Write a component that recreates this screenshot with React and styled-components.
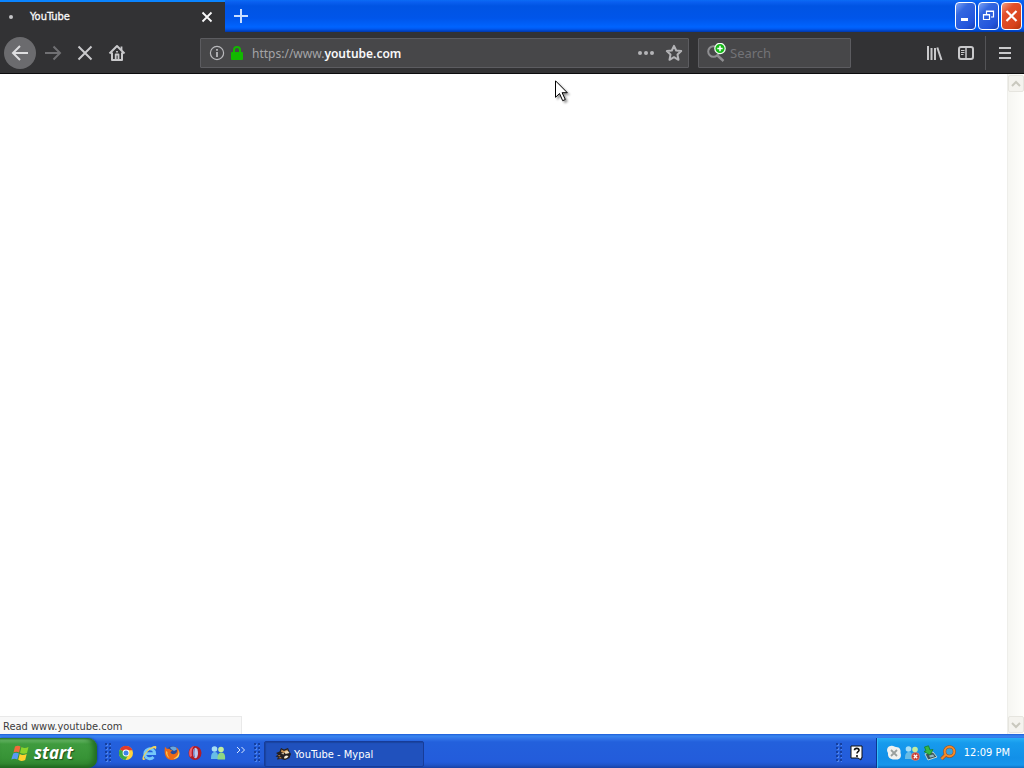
import React from "react";
import styled, { createGlobalStyle } from "styled-components";

const Global = createGlobalStyle`
  * { box-sizing: border-box; }
  body { margin: 0; font-family: "DejaVu Sans Condensed", "Noto Sans", sans-serif; font-size: 11px; }
  button, input { font: inherit; color: inherit; margin: 0; padding: 0; border: 0; background: none; }
  svg { display: block; flex: none; }
`;

const Desktop = styled.div`
  position: relative;
  display: flex;
  flex-direction: column;
  min-height: 100vh;
  background: #fff;
  overflow: hidden;
`;

const TitleBar = styled.header`
  display: flex;
  align-items: stretch;
  height: 32px;
  background: linear-gradient(#0b6cf5 0, #0a5ff0 2px, #0054e3 6px, #0055e9 18px, #0064ff 27px, #0058f0 29px, #0036a8 32px);
`;

const Tab = styled.div`
  display: flex;
  align-items: center;
  width: 225px;
  padding: 0 8px;
  border-top: 2px solid #0a84ff;
  background: #323234;
  color: #f9f9fa;
`;

const LoadingDot = styled.span`
  width: 4px;
  height: 4px;
  margin: 0 17px 0 1px;
  border-radius: 2px;
  background: #c4c4c6;
`;

const TabTitle = styled.span`
  flex: 1;
  line-height: 16px;
  -webkit-text-stroke: 0.3px;
`;

const IconButton = styled.button`
  display: flex;
  align-items: center;
  justify-content: center;
  flex: none;
  width: ${(p) => p.$w || 32}px;
  height: ${(p) => p.$h || 32}px;
  color: ${(p) => p.$color || "#c9c9cb"};
`;

const BackButton = styled(IconButton)`
  margin-right: 1px;
  border-radius: 50%;
  background: #6b6b6e;
  color: #dedee0;
`;

const WindowControls = styled.div`
  display: flex;
  gap: 2px;
  margin-left: auto;
  padding: 2px 2px 2px 0;
`;

const WindowButton = styled.button`
  display: flex;
  align-items: center;
  justify-content: center;
  width: 21px;
  height: 28px;
  border: 1px solid #fff;
  border-radius: 4px;
  background: ${(p) =>
    p.$close
      ? "linear-gradient(135deg, #f0a085, #e2502c 30%, #d8431c 75%, #b33309)"
      : "linear-gradient(135deg, #7da3f5, #3367e0 30%, #2355dc 75%, #1841b8)"};
`;

const NavBar = styled.nav`
  display: flex;
  align-items: center;
  height: 42px;
  padding: 1px 3px 0 4px;
  border-bottom: 1px solid #0c0c0d;
  background: #323234;
`;

const Field = styled.div`
  display: flex;
  align-items: center;
  height: 30px;
  border: 1px solid #5c5c60;
  border-radius: 1px;
  background: #474749;
`;

const AddressField = styled(Field)`
  flex: 1;
  min-width: 0;
  margin-left: 67px;
  padding-left: 8px;
  font-family: "Noto Sans", sans-serif;
  font-size: 12px;
`;

const Scheme = styled.label`
  margin-left: 3px;
  color: #a4a4a7;
`;

const AddressInput = styled.input`
  flex: 1;
  min-width: 0;
  color: #f9f9fa;
  font-weight: 600;
  outline: 0;
`;

const SearchField = styled(Field)`
  width: 153px;
  margin: 0 67px 0 9px;
  padding-left: 8px;
  font-family: "Noto Sans", sans-serif;
  font-size: 13px;
`;

const SearchInput = styled.input`
  flex: 1;
  min-width: 0;
  margin-left: 3px;
  outline: 0;
  color: #f9f9fa;
  &::placeholder { color: #737377; opacity: 1; }
`;

const Divider = styled.span`
  width: 1px;
  height: 34px;
  margin: 0 3px;
  background: #545457;
`;

const Viewport = styled.main`
  position: relative;
  display: flex;
  flex: 1;
  justify-content: flex-end;
`;

const ScrollBar = styled.div`
  display: flex;
  flex-direction: column;
  justify-content: space-between;
  width: 17px;
  padding: 1px 0;
  border-left: 1px solid #eeeeea;
  background: linear-gradient(90deg, #f6f6f2, #fefefb);
`;

const ScrollButton = styled.button`
  display: flex;
  align-items: center;
  justify-content: center;
  height: 17px;
  border: 1px solid #e6e5df;
  border-radius: 2px;
  background: #f4f3ee;
  color: #c9c8be;
`;

const StatusPanel = styled.div`
  position: absolute;
  left: 0;
  bottom: 0;
  width: 242px;
  height: 18px;
  padding-left: 3px;
  border: solid #e9e9e9;
  border-width: 1px 1px 0 0;
  background: #f8f8f8;
  color: #3c3c3c;
  line-height: 19px;
`;

const Pointer = styled.svg`
  position: absolute;
  left: 555px;
  top: 80px;
  filter: drop-shadow(2px 2px 1px rgba(0, 0, 0, 0.4));
`;

const TaskBar = styled.footer`
  display: flex;
  align-items: stretch;
  height: 34px;
  padding-top: 4px;
  background: linear-gradient(#1d5cd8 0, #3886f0 2px, #3478ea 4px, #2360dc 8px, #235cdb 28px, #2054c8 31px, #1941a5 34px);
`;

const StartButton = styled.button`
  display: flex;
  align-items: center;
  gap: 4px;
  width: 97px;
  padding-left: 11px;
  border-radius: 0 9px 9px 0;
  background: linear-gradient(#2f7f2e 0, #69b968 2px, #3f9b3e 6px, #379336 20px, #318630 26px, #1f661e 30px);
  box-shadow: inset -4px 0 5px #226d22, 1px 0 2px #1545a8;
  color: #fff;
  font-family: "Open Sans", "Noto Sans", sans-serif;
  font-size: 17px;
  font-style: italic;
  font-weight: 700;
  line-height: 20px;
  text-shadow: 1px 1px 1px #1c4d1c;
`;

const Grip = styled.span`
  width: 6px;
  margin: 5px 0;
  background: radial-gradient(circle at 1px 1px, #153f9f 1px, transparent 1px) 0 0 / 4px 4px,
    radial-gradient(circle at 1px 1px, #4d83ec 1px, transparent 1px) 1px 1px / 4px 4px;
`;

const QuickLaunch = styled.div`
  display: flex;
  align-items: center;
  gap: 7px;
  margin: 0 5px 0 8px;
`;

const QuickButton = styled(IconButton)`
  color: #dce9ff;
`;

const TaskButton = styled.button`
  display: flex;
  align-items: center;
  gap: 3px;
  width: 160px;
  height: 26px;
  margin: 3px auto 0 4px;
  padding-left: 10px;
  border: 1px solid #173c98;
  border-radius: 2px;
  background: #2051bd;
  box-shadow: inset 1px 1px 1px #1a449f;
  color: #fff;
`;

const Tray = styled.div`
  display: flex;
  align-items: center;
  gap: 2px;
  padding: 0 14px 0 9px;
  border-left: 1px solid #0c3690;
  background: linear-gradient(#28b0f5 0, #179bed 5px, #1290e8 20px, #1696ec 27px, #0f6fc2 30px);
  box-shadow: inset 1px 0 0 #35bdf8;
  color: #fff;
`;

const Clock = styled.time`
  margin-left: 6px;
  line-height: 16px;
`;

const LaunchGrip = styled(Grip)`
  align-self: stretch;
`;

const HelpButton = styled(IconButton)`
  align-self: center;
  margin: 0 11px 0 7px;
`;

const Line = ({ d, w = 2, size = 18, ...rest }) => (
  <svg width={size} height={size} viewBox="0 0 18 18" fill="none" stroke="currentColor" strokeWidth={w} {...rest}>
    <path d={d} />
  </svg>
);

const InfoIcon = () => (
  <svg width="16" height="16" viewBox="0 0 16 16" fill="none" stroke="#b9b9bc">
    <circle cx="8" cy="8" r="6.600" strokeWidth="1.200" />
    <path d="M8 7v5M8 4v1.800" strokeWidth="1.800" />
  </svg>
);

const LockIcon = () => (
  <svg width="12" height="16" viewBox="0 0 12 16">
    <path d="M3 8V5a3 3 0 0 1 6 0v3" fill="none" stroke="#12b800" strokeWidth="2" />
    <rect x="0" y="7" width="12" height="8" rx="1" fill="#12b800" />
  </svg>
);

const HomeIcon = () => (
  <svg width="18" height="18" viewBox="0 0 18 18" fill="none" stroke="currentColor" strokeWidth="2" strokeLinejoin="round">
    <path d="M1.500 9.500 9 2l7.500 7.500M4 8.500V16h10V8.500" />
    <path d="M7.700 16v-5.500h2.800V16M13.500 2.500v3.500M9 7v1.500" strokeWidth="1.800" />
  </svg>
);

const StarIcon = () => (
  <svg width="18" height="18" viewBox="0 0 18 18" fill="none" stroke="#b4b4b7" strokeWidth="2" strokeLinejoin="round">
    <path d="m9 1.800 2.200 4.700 5 .6-3.700 3.500 1 5.200L9 13.200l-4.500 2.600 1-5.200L1.800 7.100l5-.6z" />
  </svg>
);

const SearchIcon = () => (
  <svg width="20" height="20" viewBox="0 0 20 20" fill="none">
    <circle cx="6.500" cy="8.500" r="5.300" stroke="#8f8f92" strokeWidth="2" />
    <path d="m10.500 12.500 6 5.500" stroke="#8f8f92" strokeWidth="2.400" />
    <circle cx="13" cy="5.500" r="5.200" fill="#16b818" stroke="#f4fff4" strokeWidth="1.200" />
    <path d="M13 2.800v5.400M10.300 5.500h5.400" stroke="#fff" strokeWidth="1.500" />
  </svg>
);

const LibraryIcon = () => (
  <svg width="18" height="18" viewBox="0 0 18 18" fill="none" stroke="currentColor" strokeWidth="2">
    <path d="M3 2v14M6.500 4v12M10 4v12M12.300 3.500 16.500 16" />
  </svg>
);

const SidebarIcon = () => (
  <svg width="18" height="18" viewBox="0 0 18 18" fill="none" stroke="currentColor">
    <rect x="2" y="3" width="14" height="12" rx="2" strokeWidth="2" />
    <path d="M9 3v12" strokeWidth="1.500" />
    <path d="M4 6.500h3.500M4 8.500h3.500M4 10.500h2.500" />
  </svg>
);

const WindowsFlag = () => (
  <svg width="19" height="19" viewBox="0 0 19 19">
    <path d="M4 2.500C6 1.300 8 1.500 9.500 2.500L8 8.500C6.500 7.500 4.500 7.500 2.500 8.500z" fill="#f26a3b" />
    <path d="M10.500 3c2 1.200 4 1.200 7 0L16 9c-2 1.200-5 1-7-.2z" fill="#8bd32c" />
    <path d="M2.200 9.500c2-1.200 4-1 5.600 0l-1.500 6c-2-1.200-4-1-6 0z" fill="#599af4" />
    <path d="M8.700 10c2 1.200 4 1.200 7 0l-1.500 6c-3 1.200-5 1.200-7-.2z" fill="#ffd02e" />
  </svg>
);

const ChromeIcon = () => (
  <svg width="16" height="16" viewBox="0 0 16 16">
    <circle cx="8" cy="8" r="7" fill="#ffd43c" />
    <path d="M8 8 1.900 4.500A7 7 0 0 1 14.500 5.200H8z" fill="#e23a2b" />
    <path d="M1.900 4.500A7 7 0 0 0 7.500 15l3-5.500L8 8z" fill="#3ca849" />
    <circle cx="8" cy="8" r="3.400" fill="#fff" />
    <circle cx="8" cy="8" r="2.500" fill="#3f83e8" />
  </svg>
);

const ExplorerIcon = () => (
  <svg width="16" height="16" viewBox="0 0 16 16" fill="none">
    <path d="M12.500 12a5 5 0 1 1 1.200-3.300H5" stroke="#75c8fa" strokeWidth="2.800" />
    <path d="M2 15C-1 12 9 1 14 1c2 0 1.500 2 .5 3.500C14 2 9 3 5 8.500 2.500 12 2 14 5 13.500 3.800 14.800 2.700 15.300 2 15z" fill="#f2d45b" />
  </svg>
);

const FirefoxIcon = () => (
  <svg width="16" height="16" viewBox="0 0 16 16">
    <circle cx="8.500" cy="7" r="6" fill="#284b9b" />
    <path d="M6 2.500c3-2 7-.5 7 2L10 6 7 4z" fill="#68a8df" />
    <path d="M1 2c1 .3 1.500 1.500 2 2 1.500-.5 3 0 3.500 1l2 .5-2 1.500c0 2 3 3 5 1.500 2-1.300 1.800-4 .5-6.500 4 2.500 4.500 7.500 1.500 10.500C10 16.500 3.500 15.500 1.500 11 .4 8.500.4 5 1 2z" fill="#ec6a19" />
    <path d="M14.200 4.500c1.300 4-1 8-4.700 9 5 1.500 7.500-4.500 4.700-9z" fill="#ffd35a" />
    <path d="M2 6c-.5 3 1 6 3.500 7C4 11 3 9 3.500 7z" fill="#ffc34a" />
  </svg>
);

const OperaIcon = () => (
  <svg width="16" height="16" viewBox="0 0 16 16">
    <ellipse cx="8" cy="8" rx="6.500" ry="7" fill="#b01c28" />
    <path d="M7 1C3 2 1 7 3 12l2-1C4 7 5 3 7 1z" fill="#ed626c" />
    <ellipse cx="8.500" cy="8" rx="2.500" ry="5.300" fill="#bcc9ee" />
    <path d="M8 3c-1 3-1 7 0 10-2-2-2-8 0-10z" fill="#344897" />
  </svg>
);

const MessengerIcon = ({ offline }) => (
  <svg width="16" height="16" viewBox="0 0 16 16">
    <circle cx="4.500" cy="4" r="2.800" fill="#a6def5" />
    <path d="M1 14c0-5 1-7 4-7s3 3 3 7z" fill="#67bce6" />
    <circle cx="11" cy="4.500" r="2.800" fill="#c3ec9c" />
    <path d="M7.500 14.500c0-5 1-7 4-7s4 3 3.500 7z" fill="#8fd783" />
    {offline && <circle cx="11.500" cy="11.500" r="4" fill="#c63a30" stroke="#e8958c" strokeWidth=".6" />}
    {offline && <path d="m9.800 9.800 3.400 3.400m0-3.400-3.400 3.400" stroke="#fff" strokeWidth="1.300" />}
  </svg>
);

const MypalIcon = () => (
  <svg width="16" height="16" viewBox="0 0 16 16">
    <path d="M1 7 4.500 5.500 6 2l3 1.500L13 2l1.500 3.500L16 8l-1.500 4L10 14l-4-1-4 .5 1-2.500-2.500-.5L3 8.500z" fill="#241f20" />
    <path d="M6.500 3.500 9 5l3.500-1.500L13 6 9 7 6 6z" fill="#c99556" />
    <path d="m9.500 5.500 1 2.500 4-1-1.500-2zM6 7.500l3-.5-.5 1.500z" fill="#f0ddba" />
    <path d="m9 11 2-1.500 2.500.5-1.500 2-2.500.7z" fill="#f5ead5" />
    <path d="m2.500 9.500 3-.5-1 1.500zM3 12l3-1 .5 1.500z" fill="#bb8047" />
  </svg>
);

const UnavailableIcon = () => (
  <svg width="16" height="16" viewBox="0 0 16 16">
    <path d="M4.500 1C7 0 8 1.500 10 2c4 0 5 3 4.500 6 1.500 4-1 7-4.500 6.500C4 15 1.500 12 2 8 0 5 1.500 1 4.500 1z" fill="#f1f1ef" />
    <path d="m5 5 6 6m0-6-6 6" stroke="#9a9f9d" strokeWidth="1.800" />
  </svg>
);

const HardwareIcon = () => (
  <svg width="16" height="16" viewBox="0 0 16 16">
    <path d="m3 9 8-2 4 5-9 3z" fill="#40565c" stroke="#bad7d6" />
    <path d="m7 10.500 4-1 1.500 2-4.500 1z" fill="#91b9c4" />
    <path d="M8 10 2 6.500l2-.6L2.500 2 6.500.8 8 5l3-.5z" fill="#36b846" stroke="#167f28" strokeWidth=".8" />
  </svg>
);

const MagnifierIcon = () => (
  <svg width="16" height="16" viewBox="0 0 16 16" fill="none">
    <path d="M6 9.500 1.500 14" stroke="#a34c13" strokeWidth="3.500" />
    <circle cx="9.500" cy="6.500" r="4.800" fill="#39a1df" stroke="#a34c13" strokeWidth="3" />
    <path d="M6 9.500 1.500 14" stroke="#f28a2b" strokeWidth="2.300" />
    <circle cx="9.500" cy="6.500" r="4.800" stroke="#f28a2b" strokeWidth="2" />
  </svg>
);

const quickLaunch = [
  ["Google Chrome", ChromeIcon],
  ["Internet Explorer", ExplorerIcon],
  ["Firefox", FirefoxIcon],
  ["Opera", OperaIcon],
  ["Messenger", MessengerIcon],
];

export default function App() {
  return (
    <Desktop>
      <Global />
      <TitleBar>
        <Tab>
          <LoadingDot />
          <TabTitle>YouTube</TabTitle>
          <IconButton $w={20} $h={20} $color="#f9f9fa" aria-label="Close tab">
            <Line d="M4.500 4.500l9 9m0-9-9 9" w={1.800} />
          </IconButton>
        </Tab>
        <IconButton $color="#c9deff" aria-label="New tab">
          <Line d="M9 2v14M2 9h14" w={2} />
        </IconButton>
        <WindowControls>
          <WindowButton aria-label="Minimize">
            <svg width="13" height="14" viewBox="0 0 13 14"><path d="M2 9h7v3H2z" fill="#fff" /></svg>
          </WindowButton>
          <WindowButton aria-label="Restore">
            <svg width="13" height="14" viewBox="0 0 13 14" fill="none" stroke="#fff">
              <path d="M4.500 5V2h7v6H9M4 2.500h8M1.500 5.500h6v5h-6zM1 6h7" strokeWidth="1.200" />
            </svg>
          </WindowButton>
          <WindowButton $close aria-label="Close window">
            <svg width="13" height="14" viewBox="0 0 13 14"><path d="m1.500 2 10 10m0-10-10 10" stroke="#fff" strokeWidth="2.200" /></svg>
          </WindowButton>
        </WindowControls>
      </TitleBar>
      <NavBar>
        <BackButton aria-label="Back"><Line d="M17 9H2m7-7L2 9l7 7" /></BackButton>
        <IconButton $color="#707073" aria-label="Forward"><Line d="M1 9h15M9.500 2.500 16 9l-6.500 6.500" /></IconButton>
        <IconButton aria-label="Stop"><Line d="M2.500 2.500l13 13m0-13-13 13" /></IconButton>
        <IconButton aria-label="Home"><HomeIcon /></IconButton>
        <AddressField>
          <IconButton $w={16} $h={16} aria-label="Site information"><InfoIcon /></IconButton>
          <IconButton $w={24} $h={20} aria-label="Secure connection"><LockIcon /></IconButton>
          <Scheme htmlFor="address">https://www.</Scheme>
          <AddressInput id="address" defaultValue="youtube.com" />
          <IconButton $w={28} $h={20} $color="#b4b4b7" aria-label="Page actions">
            <svg width="18" height="6" fill="currentColor"><circle cx="3" cy="3" r="2" /><circle cx="9" cy="3" r="2" /><circle cx="15" cy="3" r="2" /></svg>
          </IconButton>
          <IconButton $w={28} $h={20} aria-label="Bookmark"><StarIcon /></IconButton>
        </AddressField>
        <SearchField>
          <SearchIcon />
          <SearchInput aria-label="Search" placeholder="Search" />
        </SearchField>
        <IconButton aria-label="Library"><LibraryIcon /></IconButton>
        <IconButton aria-label="Sidebars"><SidebarIcon /></IconButton>
        <Divider />
        <IconButton aria-label="Menu"><Line d="M3 4h12M3 9h12M3 14h12" /></IconButton>
      </NavBar>
      <Viewport>
        <ScrollBar>
          <ScrollButton aria-label="Scroll up"><Line size={12} d="m3 12 6-6 6 6" w={3} /></ScrollButton>
          <ScrollButton aria-label="Scroll down"><Line size={12} d="m3 6 6 6 6-6" w={3} /></ScrollButton>
        </ScrollBar>
        <StatusPanel>Read www.youtube.com</StatusPanel>
      </Viewport>
      <TaskBar>
        <StartButton><WindowsFlag />start</StartButton>
        <QuickLaunch>
          <LaunchGrip />
          {quickLaunch.map(([name, Icon]) => (
            <QuickButton key={name} $w={16} $h={16} aria-label={name}><Icon /></QuickButton>
          ))}
          <QuickButton $w={16} $h={24} aria-label="More programs">
            <svg width="10" height="14" viewBox="0 0 10 14" fill="none" stroke="currentColor"><path d="m1 1 3 3-3 3M5.500 1l3 3-3 3" /></svg>
          </QuickButton>
        </QuickLaunch>
        <Grip />
        <TaskButton><MypalIcon />YouTube - Mypal</TaskButton>
        <Grip />
        <HelpButton $w={16} $h={16} aria-label="Help">
          <svg width="14" height="16" viewBox="0 0 14 16">
            <path d="M1 1h11v12h-1v2l-3-2H1z" fill="#fff" stroke="#111" />
            <path d="M4.500 5.200c0-2.500 4.500-2.500 4.500 0 0 1.500-2 1.500-2 3.300M7 10v2" fill="none" stroke="#111" strokeWidth="1.600" />
          </svg>
        </HelpButton>
        <Tray>
          <UnavailableIcon />
          <MessengerIcon offline />
          <HardwareIcon />
          <MagnifierIcon />
          <Clock dateTime="12:09">12:09 PM</Clock>
        </Tray>
      </TaskBar>
      <Pointer width="13" height="22" viewBox="0 0 13 22">
        <path d="M.5.800v16.500l4-3.800 3.200 7.200 2.600-1.200-3.200-6.800h5.200z" fill="#fff" stroke="#000" />
      </Pointer>
    </Desktop>
  );
}
